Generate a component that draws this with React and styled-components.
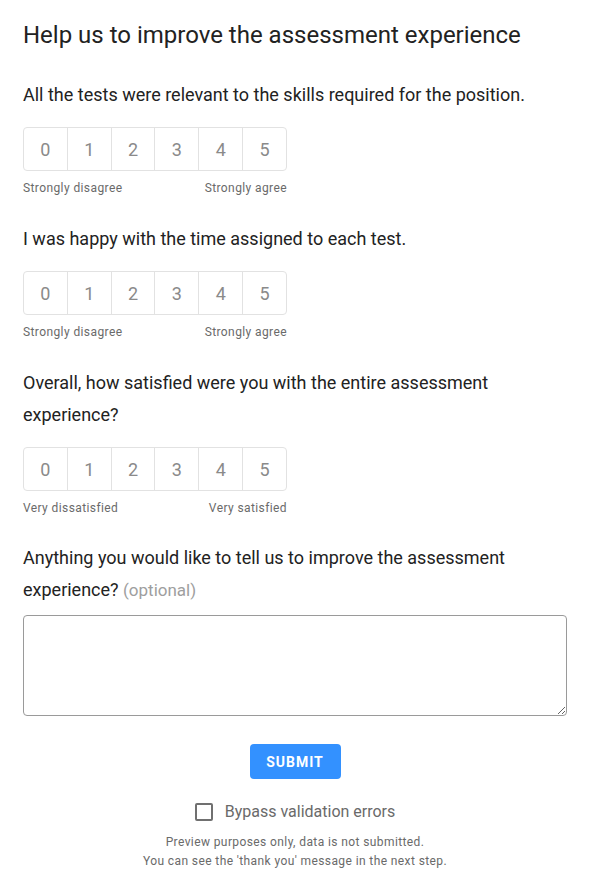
import React from 'react'
import styled, { createGlobalStyle } from 'styled-components'

const GlobalStyle = createGlobalStyle`
    body {
        margin: 0;
        background: #ffffff;
        font-family: Roboto, 'Liberation Sans', sans-serif;
    }
`;

const Page = styled.div`
    padding: 19px 22px 12px 23px;
    color: #222222;
`;

const Title = styled.h1`
    margin: 0 0 28px;
    font-size: 24px;
    font-weight: 400;
    line-height: 32px;
    color: #222222;
`;

const Section = styled.div`
    margin-bottom: ${props => props.gap || 27}px;
`;

const Question = styled.div`
    font-size: 18px;
    line-height: 32px;
    color: #222222;
    margin-bottom: ${props => props.spacing || 16}px;
`;

const Optional = styled.span`
    color: #9e9e9e;
    font-size: 17px;
    line-height: 1;
`;

const Scale = styled.div`
    display: inline-flex;
    flex-direction: column;
`;

const Cells = styled.div`
    display: flex;
    border: 1px solid #e2e2e2;
    border-radius: 4px;
    width: 264px;
    box-sizing: border-box;
    overflow: hidden;
`;

const Cell = styled.div`
    flex: 1;
    height: 42px;
    display: flex;
    align-items: center;
    justify-content: center;
    font-size: 18px;
    color: #8a8a8a;
    border-left: ${props => (props.first ? 'none' : '1px solid #e2e2e2')};
`;

const ScaleLabels = styled.div`
    display: flex;
    justify-content: space-between;
    margin-top: 9px;
    font-size: 12px;
    line-height: 16px;
    letter-spacing: 0.4px;
    color: #6a6a6a;
`;

const TextArea = styled.textarea`
    display: block;
    width: 100%;
    height: 101px;
    box-sizing: border-box;
    border: 1px solid #9a9a9a;
    border-radius: 4px;
    padding: 8px;
    font-family: inherit;
    font-size: 16px;
    margin: 0;
`;

const Actions = styled.div`
    display: flex;
    flex-direction: column;
    align-items: center;
    margin-top: 28px;
`;

const SubmitButton = styled.button`
    width: 91px;
    height: 35px;
    border: none;
    border-radius: 4px;
    background: #3391ff;
    color: #ffffff;
    font-family: inherit;
    font-size: 14px;
    font-weight: 700;
    letter-spacing: 1px;
    padding: 0;
`;

const CheckRow = styled.label`
    display: flex;
    align-items: center;
    gap: 12px;
    margin-top: 23px;
    font-size: 16px;
    color: #6a6a6a;
`;

const Box = styled.span`
    width: 14px;
    height: 14px;
    border: 2px solid #707070;
    border-radius: 2px;
`;

const Note = styled.div`
    margin-top: 12px;
    text-align: center;
    font-size: 12px;
    line-height: 19px;
    letter-spacing: 0.4px;
    color: #6a6a6a;
`;

const RatingScale = ({ low, high }) => (
    <Scale>
        <Cells>
            {[0, 1, 2, 3, 4, 5].map(n => (
                <Cell key={n} first={n === 0}>{n}</Cell>
            ))}
        </Cells>
        <ScaleLabels>
            <span>{low}</span>
            <span>{high}</span>
        </ScaleLabels>
    </Scale>
)

export default function App() {
    return (
        <>
            <GlobalStyle />
            <Page>
                <Title>Help us to improve the assessment experience</Title>
                <Section>
                    <Question>All the tests were relevant to the skills required for the position.</Question>
                    <RatingScale low="Strongly disagree" high="Strongly agree" />
                </Section>
                <Section>
                    <Question>I was happy with the time assigned to each test.</Question>
                    <RatingScale low="Strongly disagree" high="Strongly agree" />
                </Section>
                <Section gap={26}>
                    <Question>Overall, how satisfied were you with the entire assessment experience?</Question>
                    <RatingScale low="Very dissatisfied" high="Very satisfied" />
                </Section>
                <Section gap={0}>
                    <Question spacing={9}>
                        Anything you would like to tell us to improve the assessment experience? <Optional>(optional)</Optional>
                    </Question>
                    <TextArea />
                </Section>
                <Actions>
                    <SubmitButton>SUBMIT</SubmitButton>
                    <CheckRow>
                        <Box />
                        Bypass validation errors
                    </CheckRow>
                    <Note>
                        Preview purposes only, data is not submitted.<br />
                        You can see the 'thank you' message in the next step.
                    </Note>
                </Actions>
            </Page>
        </>
    )
}
